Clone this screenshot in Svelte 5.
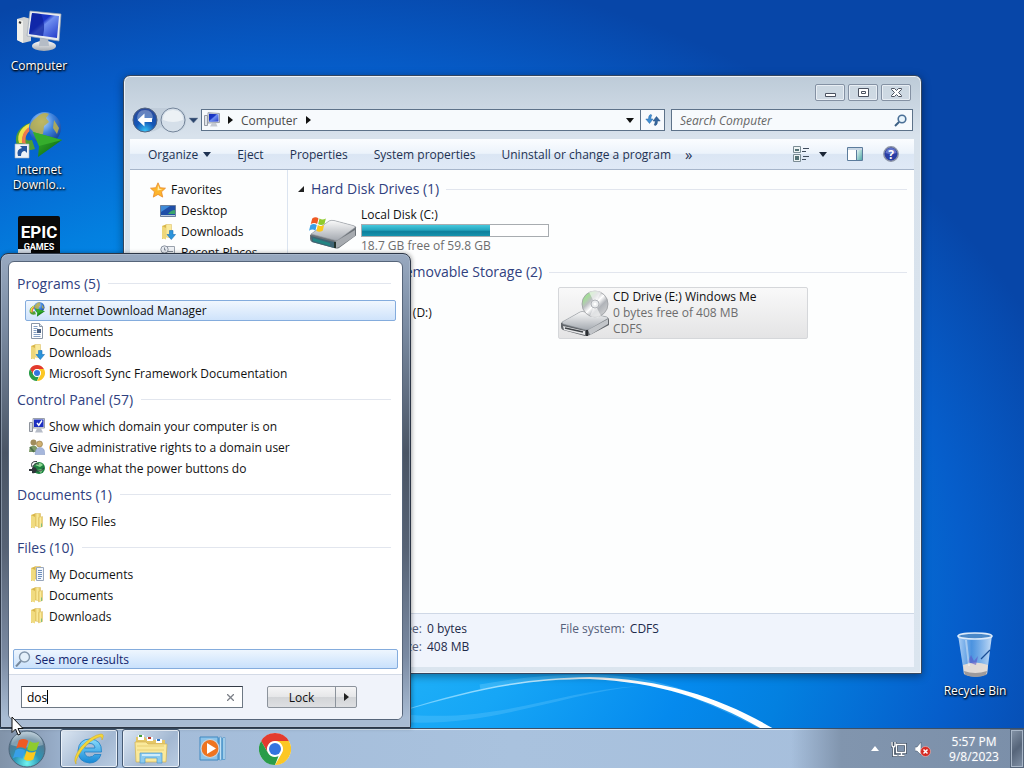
<script>
  const programs = [
    { text: 'Internet Download Manager', icon: 'idm', selected: true },
    { text: 'Documents', icon: 'doc' },
    { text: 'Downloads', icon: 'down' },
    { text: 'Microsoft Sync Framework Documentation', icon: 'chrome' }
  ];
  const results = [
    { title: 'Programs (5)', items: programs },
    {
      title: 'Control Panel (57)',
      items: [
        { text: 'Show which domain your computer is on', icon: 'domain' },
        { text: 'Give administrative rights to a domain user', icon: 'users' },
        { text: 'Change what the power buttons do', icon: 'power' }
      ]
    },
    { title: 'Documents (1)', items: [{ text: 'My ISO Files', icon: 'folder' }] },
    {
      title: 'Files (10)',
      items: [
        { text: 'My Documents', icon: 'folderdoc' },
        { text: 'Documents', icon: 'folder' },
        { text: 'Downloads', icon: 'folder' }
      ]
    }
  ];
  const favorites = [
    { text: 'Desktop', icon: 'desktop' },
    { text: 'Downloads', icon: 'down' },
    { text: 'Recent Places', icon: 'recent' }
  ];
  const commands = ['Eject', 'Properties', 'System properties', 'Uninstall or change a program'];
  let query = $state('dos');
  let search = $state('');
  const used = 69;
</script>

<svg class="defs" width="0" height="0" aria-hidden="true">
  <defs>
    <linearGradient id="screen" x1="0" y1="0" x2="1" y2="1"><stop offset="0" stop-color="#1430b8" /><stop offset=".4" stop-color="#1a35c8" /><stop offset=".5" stop-color="#6f8ff0" /><stop offset="1" stop-color="#2038c8" /></linearGradient>
    <linearGradient id="silver" x1="0" y1="0" x2="0" y2="1"><stop offset="0" stop-color="#fafafa" /><stop offset="1" stop-color="#a4a9b0" /></linearGradient>
    <radialGradient id="globe" cx=".4" cy=".3" r=".75"><stop offset="0" stop-color="#c4e2ff" /><stop offset=".5" stop-color="#3f83dc" /><stop offset="1" stop-color="#123c92" /></radialGradient>
    <linearGradient id="green" x1="0" y1="0" x2="1" y2="1"><stop offset="0" stop-color="#3fc034" /><stop offset="1" stop-color="#045c0c" /></linearGradient>
    <linearGradient id="fold" x1="0" y1="0" x2="1" y2="0"><stop offset="0" stop-color="#e6c864" /><stop offset=".5" stop-color="#faeb9c" /><stop offset="1" stop-color="#e0bd50" /></linearGradient>
    <radialGradient id="navblue" cx=".5" cy=".95" r=".9"><stop offset="0" stop-color="#38c4f6" /><stop offset=".45" stop-color="#1458b8" /><stop offset="1" stop-color="#2a4a9c" /></radialGradient>
    <radialGradient id="orb" cx=".5" cy=".9" r=".9"><stop offset="0" stop-color="#6ff5f0" /><stop offset=".4" stop-color="#2b95b5" /><stop offset=".75" stop-color="#537a92" /><stop offset="1" stop-color="#b0c6d4" /></radialGradient>
    <linearGradient id="bin" x1="0" y1="0" x2="1" y2="0"><stop offset="0" stop-color="#d6ebff" stop-opacity=".8" /><stop offset=".4" stop-color="#7ab8f0" stop-opacity=".6" /><stop offset="1" stop-color="#e4f2ff" stop-opacity=".85" /></linearGradient>
    <linearGradient id="disc" x1="0" y1="0" x2="1" y2="1"><stop offset="0" stop-color="#c0c4c4" /><stop offset=".2" stop-color="#a4dc98" /><stop offset=".35" stop-color="#bcbfc2" /><stop offset=".5" stop-color="#fff" /><stop offset=".65" stop-color="#b0b3b8" /><stop offset="1" stop-color="#ddd" /></linearGradient>
    <linearGradient id="ie" x1="0" y1="0" x2="0" y2="1"><stop offset="0" stop-color="#8adcfb" /><stop offset="1" stop-color="#1688d6" /></linearGradient>
    <linearGradient id="teal" x1="0" y1="0" x2="1" y2="1"><stop offset="0" stop-color="#e8f6f4" /><stop offset="1" stop-color="#4fa8a6" /></linearGradient>
    <linearGradient id="arc" x1="0" y1="0" x2="1" y2="0"><stop offset="0" stop-color="#5cc8ff" /><stop offset=".3" stop-color="#a8e2ff" /><stop offset=".55" stop-color="#fff" /></linearGradient>
  </defs>
</svg>

{#snippet flag()}
  <path d="M1 2q5-3 9 0l-2 8q-4-3-9 0z" fill="#ee5a24" />
  <path d="M11.500 2q4 3 9 0l-2 8q-5 3-9 0z" fill="#8fcb2e" />
  <path d="M-1.500 11.500q5-3 9 0l-2 8q-4-3-9 0z" fill="#38a0e8" />
  <path d="M9 11.500q4 3 9 0l-2 8q-5 3-9 0z" fill="#fcc81c" />
{/snippet}

{#snippet chrome()}
  <circle cx="16" cy="16" r="16" fill="#fff" />
  <path d="M16 0a16 16 0 0 1 13.860 8H16a8 8 0 0 0-6.930 12L2.140 8A16 16 0 0 1 16 0z" fill="#e33b2e" />
  <path d="M2.140 8l6.930 12A8 8 0 0 0 16 24l3.500-.8L16 32A16 16 0 0 1 2.140 8z" fill="#2a9c48" />
  <path d="M29.860 8A16 16 0 0 1 16 32l6.930-12A8 8 0 0 0 16 8z" fill="#fcc725" />
  <circle cx="16" cy="16" r="7.600" fill="#fff" />
  <circle cx="16" cy="16" r="6" fill="#3474e0" />
{/snippet}

{#snippet idm()}
  <path d="M20 10C6 12-1 24 3 33q5 8 18 4L18 28q-8 2-6-5 1-5 9-8z" fill="#4f9e34" />
  <path d="M20 10C8 13 2 22 5 31l4 0q-3-11 11-18z" fill="#f0e04a" />
  <path d="M19 13Q7 18 8 31l4 1q-3-10 8-16z" fill="#ee7a4c" />
  <circle cx="31" cy="16" r="16" fill="url(#globe)" />
  <path d="M22 6q7-7 13-4l-3 4 3 4-5 4-1 8-6 2-7-8q0-6 6-10zM40 8l5 8-2 6-4-6z" fill="#bdb048" opacity=".85" />
  <path d="M19 20l29 8-24 17 1-11z" fill="url(#green)" />
  <path d="M19 20l29 8-23 6z" fill="#35ad2c" />
{/snippet}

{#snippet icon(name)}
  <svg class="i16" viewBox="0 0 16 16" aria-hidden="true">
    {#if name === 'idm'}
      <g transform="scale(.33)">{@render idm()}</g>
    {:else if name === 'chrome'}
      <g transform="scale(.5)">{@render chrome()}</g>
    {:else if name === 'doc'}
      <path d="M2.500 .5h8l3 3v12h-11z" fill="#fff" stroke="#8b97a8" />
      <path d="M10.500 .5v3h3" fill="#d6dfea" stroke="#8b97a8" />
      <path d="M4.500 3.500h4M4.500 5.500h4M4.500 7.500h3M4.500 9.500h3M4.500 11.500h7M4.500 13.500h7" stroke="#86a0c4" />
      <path d="M8 6h4v4H8z" fill="#4a5f80" />
    {:else if name === 'down'}
      <path d="M2 2l4-1.500V13L2 15z" fill="#d8b548" /><path d="M6 .5h5.500V14L6 13z" fill="#faea9c" stroke="#d8b958" stroke-width=".5" /><path d="M2 2l4 2v11.500L2 14z" fill="#eed77a" />
      <path d="M9.500 6.500h3.500v4h2.500l-4.200 5-4.300-5h2.500z" fill="#2b94dc" stroke="#1b6fb4" stroke-width=".6" />
    {:else if name === 'folder' || name === 'folderdoc'}
      <path d="M2 2l4-1.500V13L2 15z" fill="#d8b548" /><path d="M6 .5h5.500V14L6 13z" fill="url(#fold)" stroke="#d8b958" stroke-width=".5" /><path d="M2 2l4 2v11.500L2 14z" fill="#f0db80" />
      {#if name === 'folder'}
        <path d="M9.500 4.500l4-1V13.500L9.500 15z" fill="url(#fold)" stroke="#dcc068" stroke-width=".5" /><path d="M12.500 10.500v3.500" stroke="#7fc080" />
      {:else}
        <path d="M7.500 1.500h7v13h-7z" fill="#f3f7fd" stroke="#98a6bc" /><path d="M9 4.500h4M9 6.500h4M9 8.500h4M9 10.500h4M9 12.500h3" stroke="#6c8dbb" />
      {/if}
    {:else if name === 'domain'}
      <path d="M.5 4.500h3v9h-3z" fill="#d6dae0" stroke="#8d939c" /><path d="M4 .5h11.500v9.500H4z" fill="#dfe3ea" stroke="#9aa0aa" /><path d="M5 1.500h9.500v7.500H5z" fill="#1c2fc0" /><path d="M8 5l1.800 2.200L13 2.500" stroke="#fff" stroke-width="1.500" fill="none" /><path d="M8 10.500h4l2 4H6z" fill="#b6bcc8" />
    {:else if name === 'users'}
      <circle cx="4.500" cy="3.500" r="3" fill="#a08c5c" /><path d="M0 13q0-6.500 4.500-6.500T9 13z" fill="#7d9a68" /><circle cx="10.500" cy="5" r="3" fill="#d0b070" stroke="#8b7440" stroke-width=".6" /><path d="M6 15.500q0-7 5-7t5 7z" fill="#a6b7dc" stroke="#8094c0" stroke-width=".5" /><path d="M1 8l4 5" stroke="#4c6f4c" stroke-width="2" />
    {:else if name === 'power'}
      <circle cx="10" cy="8" r="6" fill="#1e8240" /><path d="M6 5q5-4 8 0l-3 2zM8 10l6-1-2 4z" fill="#8ed892" /><path d="M0 9h3V7.500q4-1.500 5 2.500-1 4-5 3v-2H0z" fill="#30353b" /><path d="M3 7Q1 1 8 1.500M4 7q0-4 6-3" stroke="#30353b" fill="none" /><path d="M8 11q4 1 7-3" stroke="#30353b" fill="none" />
    {:else if name === 'desktop'}
      <path d="M.5 2.500h15v11H.5z" fill="#1f4fa8" stroke="#6b7f9c" /><path d="M1 3l9 0-9 6z" fill="#3f8bd8" /><path d="M1 12h14v1H1z" fill="#b9cadd" /><path d="M8 11q3-4 7-4v4z" fill="#3aa66c" />
    {:else if name === 'recent'}
      <path d="M6.500 1.500h8v12h-12v-6" fill="#eef1f5" stroke="#9aa2ad" /><circle cx="4.500" cy="4.500" r="3.700" fill="#e6eaf0" stroke="#8a929e" /><path d="M4.500 2.500v2.500H6M8 6.500h5M8 9.500h5M4 11.500h9" stroke="#7f8894" fill="none" />
    {:else if name === 'computer'}
      <path d="M.5 3.500h3v10h-3z" fill="#dfe3e8" stroke="#969ca6" /><path d="M4 .7l11.500.8v9L4 11z" fill="#e6e9ee" stroke="#9aa0aa" /><path d="M5 1.700l9.500.6V9.500L5 10z" fill="url(#screen)" /><path d="M8 11h4l1.500 3.500H6z" fill="#c4c9d2" />
    {/if}
  </svg>
{/snippet}

{#snippet drive()}
  <path d="M1 27L20 13q2-1 5-.5l19 5q4 1 3 3v7L30 40q-2 1-5 0L3 34q-2-1-2-3z" fill="#6c7278" />
  <path d="M2 26L20 13q2-1 5-.5l19 5q3 1 2 2L29 32q-2 1-4 0z" fill="url(#silver)" stroke="#999ea5" stroke-width=".6" />
  <path d="M2 28l23 6v6L3 34z" fill="#3f6474" /><path d="M4 30l17 5v3L4 33z" fill="#238583" />
  <path d="M26 34l20-12v6L30 39q-2 1-4 1z" fill="#a7abb0" /><path d="M25 34h2v6h-2z" fill="#24332c" />
{/snippet}

<div class="desktop">
  <main class="space">
    <svg class="swoosh" viewBox="0 0 1024 728" preserveAspectRatio="xMidYMax slice" aria-hidden="true">
      <path d="M400 714C500 724 560 690 640 686 560 694 490 728 400 722z" fill="#7fd4ff" opacity=".25" />
      <path d="M480 687C530 678 560 677 590 677 660 677 710 700 768 730" fill="none" stroke="#7fd8ff" stroke-width="5" opacity=".3" />
      <path d="M400 711C480 686 530 678 590 677 670 679 730 702 779 732L767 732C715 701 660 682 590 679 530 679 480 688 400 712z" fill="url(#arc)" />
    </svg>

    <div class="shortcuts">
      <button class="shortcut">
        <svg width="46" height="46" viewBox="0 0 46 46" aria-hidden="true">
          <path d="M1 11l7-2 7 2v22l-8 2-6-3z" fill="#d0d2d3" /><path d="M1 11l6 2v22l-6-3z" fill="#f0f0ec" /><path d="M3 14l2 1" stroke="#333" stroke-width="2" />
          <ellipse cx="28" cy="38" rx="12" ry="5" fill="url(#silver)" /><path d="M24 30h8l1 8H23z" fill="#b5bcc6" />
          <path d="M14 3l31 3-2 27-32-5z" fill="#e9ecef" stroke="#9ba5b2" stroke-width=".7" /><path d="M16 5l27 3-2 22-28-4z" fill="url(#screen)" /><path d="M16 5l9 1q5 10 2 22l-14-2z" fill="#0d229c" opacity=".7" />
        </svg>
        <span>Computer</span>
      </button>
      <button class="shortcut">
        <svg width="50" height="48" viewBox="0 0 50 48" aria-hidden="true">
          {@render idm()}
          <path d="M1 32h14v14H1z" fill="#eef3f8" stroke="#a9b3bf" stroke-width=".6" /><path d="M4 44q-2-7 4-8l-2-2h7v7l-2-2q-4 0-4 5z" fill="#26579f" />
        </svg>
        <span>Internet Downlo...</span>
      </button>
      <button class="shortcut" aria-label="Epic Games Launcher">
        <svg width="42" height="46" viewBox="0 0 42 46" aria-hidden="true">
          <path d="M2 0h38q2 0 2 2v36l-21 8L0 38V2q0-2 2-2z" fill="#0a0a0b" />
          <text x="21" y="22" class="epic">EPIC</text><text x="21" y="34" class="games">GAMES</text>
          <path d="M0 33h13v13H0z" fill="#d4dde7" />
        </svg>
      </button>
    </div>

    <div class="shortcuts right">
      <button class="shortcut">
        <svg width="42" height="48" viewBox="0 0 42 48" aria-hidden="true">
          <path d="M4 4h34l-5 39q-12 5-23 0z" fill="url(#bin)" />
          <path d="M9 34q12-5 25 0l-1 9q-12 5-23 0z" fill="#e8ddd5" opacity=".95" /><path d="M10 40q11 4 23 0l-1 4q-10 4-21 0z" fill="#9d9a9c" />
          <path d="M14 31l3-7 3 6 4-5-2 9z" fill="#5b55c8" opacity=".6" /><path d="M36 19l-9 9" stroke="#1a4e96" stroke-width="1.200" /><path d="M12 9l3 26" stroke="#fff" opacity=".4" stroke-width="2" />
          <ellipse cx="21" cy="5" rx="17" ry="3" fill="#4a88c8" stroke="#dceafa" stroke-width="1.600" />
        </svg>
        <span>Recycle Bin</span>
      </button>
    </div>

    <section class="window" aria-label="Computer">
      <div class="caption">
        <button aria-label="Minimize"><svg width="13" height="11"><path d="M1.500 6.500h10v3h-10z" fill="#fff" stroke="#4b5260" /></svg></button>
        <button aria-label="Maximize"><svg width="13" height="11"><path d="M1.500 1.500h10v8h-10zM4.500 4.500h4v2h-4z" fill="#fff" stroke="#4b5260" /></svg></button>
        <button aria-label="Close"><svg width="13" height="11"><path d="M1.500 1.500h3l2 2 2-2h3v1l-3 3 3 3v1h-3l-2-2-2 2h-3v-1l3-3-3-3z" fill="#fff" stroke="#4b5260" /></svg></button>
      </div>

      <div class="addressrow">
        <svg class="nav" width="66" height="26" viewBox="0 0 66 26" role="img" aria-label="Back and forward">
          <path d="M12 1h30q12 0 12 12t-12 12q-8 0-13-5-5 5-14 5z" fill="#b9c6d4" opacity=".6" />
          <circle cx="13" cy="13" r="12" fill="url(#navblue)" stroke="#526480" /><path d="M5 12q0-9 8-9t8 9q-8 3-16 0z" fill="#fff" opacity=".3" />
          <path d="M5.500 13l7-6.500v4.500H20v4h-7.500v4.500z" fill="#fff" />
          <circle cx="41" cy="13" r="12" fill="#d5dfe9" stroke="#74859a" /><path d="M31 13q0-10 10-10t10 10q-10 4-20 0z" fill="#f1f5f8" opacity=".8" />
          <path d="M57 11h9l-4.500 5z" fill="#2b466e" stroke="#7a8ba0" stroke-width=".5" />
        </svg>
        <div class="address">
          {@render icon('computer')}
          <svg width="5" height="8"><path d="M0 0l5 4-5 4z" fill="#111" /></svg>
          <span class="crumb">Computer</span>
          <svg width="5" height="8"><path d="M0 0l5 4-5 4z" fill="#111" /></svg>
          <button class="drop" aria-label="Previous locations"><svg width="8" height="5"><path d="M0 0h8L4 5z" fill="#111" /></svg></button>
          <button class="refresh" aria-label="Refresh"><svg width="16" height="14" viewBox="0 0 16 14"><path d="M5.500 1.500Q3.500 2 3.500 6H.8l3.700 4.500L8 6H5.800q0-2 1-4z" fill="#3f8fd4" stroke="#2a66a4" stroke-width=".5" /><path d="M10.500 12.500q2-.5 2-4.500h2.700l-3.700-4.500L8 8h2.200q0 2-1 4z" fill="#35679e" stroke="#274f80" stroke-width=".5" /></svg></button>
        </div>
        <label class="search">
          <input aria-label="Search Computer" placeholder="Search Computer" bind:value={search} />
          <svg width="13" height="13" viewBox="0 0 13 13" aria-hidden="true"><circle cx="8" cy="5" r="3.800" fill="#e8f4fc" stroke="#4a6f96" stroke-width="1.600" /><path d="M5 8l-4 4" stroke="#3c5f84" stroke-width="2" /></svg>
        </label>
      </div>

      <div class="client">
        <div class="toolbar">
          <button>Organize <svg width="8" height="5"><path d="M0 0h8L4 5z" fill="#1e3252" /></svg></button>
          {#each commands as c}<button>{c}</button>{/each}
          <button class="more">»</button>
          <div class="tools">
            <button aria-label="Change view"><svg width="16" height="16"><path d="M.5 .5h7v6h-7zM.5 8.500h7v7h-7z" fill="#eef4f4" stroke="#7b8c94" /><path d="M2 3h4v2H2zM2 10h4v4H2z" fill="#537074" /><path d="M10 2.500h6M9 5.500h4M10 10.500h6M9 13.500h4" stroke="#3f4c5c" /></svg></button>
            <button aria-label="More view options"><svg width="8" height="5"><path d="M0 0h8L4 5z" fill="#1b2636" /></svg></button>
            <button aria-label="Preview pane"><svg width="16" height="14"><path d="M.5 .5h15v13H.5z" fill="#fff" stroke="#5c7c9c" /><path d="M1 1h14v2H1z" fill="#c8d6e4" /><path d="M9.500 3v10" stroke="#5c7c9c" /><path d="M10 3h5v10h-5z" fill="url(#teal)" /></svg></button>
            <button aria-label="Help"><svg width="16" height="16"><circle cx="8" cy="8" r="7.200" fill="#2a3ea4" stroke="#8b93a6" stroke-width="1.400" /><path d="M2.500 7q1-5 5.500-5t5.500 5q-6 2-11 0z" fill="#8a9ae4" opacity=".6" /><text x="8" y="12.500" class="q">?</text></svg></button>
          </div>
        </div>

        <div class="panes">
          <nav class="tree">
            <a href="#favorites" class="root"><svg class="i16" viewBox="0 0 16 16" aria-hidden="true"><path d="M8 .8l2.200 4.900 5.300.5-4 3.600 1.200 5.300L8 12.400l-4.700 2.700 1.200-5.300-4-3.600 5.300-.5z" fill="#fdb52c" stroke="#e8892a" stroke-width=".8" /><path d="M8 3l1.500 4 3 .5-5 1z" fill="#fff0b0" /></svg>Favorites</a>
            {#each favorites as f}
              <a href="#{f.icon}">{@render icon(f.icon)}{f.text}</a>
            {/each}
          </nav>
          <div class="files">
            <h2 class="group"><svg width="6" height="6"><path d="M6 0v6H0z" fill="#222" /></svg>Hard Disk Drives (1)</h2>
            <div class="tiles">
              <button class="tile">
                <svg width="48" height="44" viewBox="0 0 48 44" aria-hidden="true">{@render drive()}<g transform="translate(2.500 9) scale(.7)">{@render flag()}</g></svg>
                <span class="info"><span>Local Disk (C:)</span><span class="meter"><span style="width:{used}%"></span></span><span class="dim">18.7 GB free of 59.8 GB</span></span>
              </button>
            </div>
            <h2 class="group"><svg width="6" height="6"><path d="M6 0v6H0z" fill="#222" /></svg>Devices with Removable Storage (2)</h2>
            <div class="tiles">
              <button class="tile">
                <svg width="48" height="44" viewBox="0 0 48 44" aria-hidden="true">{@render drive()}</svg>
                <span class="info"><span>CD Drive (D:)</span></span>
              </button>
              <button class="tile picked">
                <svg width="48" height="48" viewBox="0 0 48 48" aria-hidden="true">
                  <path d="M0 34l19-11q2-1 5 0l22 5q2 1 2 3v5L29 46q-2 1-5 1L2 41q-2-1-2-3z" fill="#62666b" />
                  <path d="M1 33l18-10q2-1 5 0l22 5q2 1 0 2L29 40q-2 1-4 1L2 35z" fill="url(#silver)" stroke="#8d9298" stroke-width=".5" />
                  <path d="M2 37l22 5v4L3 41z" fill="#e6e7e9" /><path d="M4 39l18 4" stroke="#3f4347" stroke-width="1.500" /><path d="M27 41l20-11v5L29 46z" fill="#c2c5c9" /><path d="M25 41h2v6h-2z" fill="#2c2f33" />
                  <circle cx="34" cy="15" r="13" fill="url(#disc)" stroke="#999ca0" stroke-width=".8" /><path d="M34 15L28 3q6-3 12 0zM34 15l6 12q-6 3-11 0z" fill="#fff" opacity=".6" /><circle cx="34" cy="15" r="4" fill="#e9ebed" stroke="#b0b3b8" /><circle cx="34" cy="15" r="1.500" fill="#fff" />
                </svg>
                <span class="info"><span>CD Drive (E:) Windows Me</span><span class="dim">0 bytes free of 408 MB</span><span class="dim">CDFS</span></span>
              </button>
            </div>
          </div>
        </div>

        <dl class="details">
          <div><dt>Space free:</dt><dd>0 bytes</dd></div>
          <div><dt>File system:</dt><dd>CDFS</dd></div>
          <div><dt>Total size:</dt><dd>408 MB</dd></div>
        </dl>
      </div>
    </section>

    <section class="start" aria-label="Start menu">
      <div class="sheet">
        <div class="results">
          {#each results as g}
            <h2 class="group">{g.title}</h2>
            {#each g.items as it}
              <button class="hit" class:on={it.selected}>{@render icon(it.icon)}{it.text}</button>
            {/each}
          {/each}
        </div>
        <button class="seemore"><svg width="16" height="16" viewBox="0 0 16 16" aria-hidden="true"><circle cx="9.500" cy="6" r="5" fill="#e4f0fa" stroke="#8397ac" stroke-width="1.400" /><path d="M6 10l-5 5.500" stroke="#77899c" stroke-width="2" /></svg>See more results</button>
        <div class="foot">
          <div class="query">
            <input aria-label="Search programs and files" bind:value={query} />
            <span class="caret"></span>
            <button aria-label="Clear" onclick={() => (query = '')}><svg width="7" height="7"><path d="M0 0l7 7M7 0L0 7" stroke="#7c8088" stroke-width="1.300" /></svg></button>
          </div>
          <div class="lock">
            <button>Lock</button>
            <button aria-label="More shut down options"><svg width="5" height="8"><path d="M0 0l5 4-5 4z" fill="#222" /></svg></button>
          </div>
        </div>
      </div>
    </section>
  </main>

  <footer class="taskbar">
    <button class="orb" aria-label="Start">
      <svg width="38" height="38" viewBox="0 0 38 38"><circle cx="19" cy="19" r="18" fill="url(#orb)" stroke="#4d6478" /><path d="M3 15Q5 2 19 2t16 13q-16 5-32 0z" fill="#fff" opacity=".28" /><g transform="translate(10 8) rotate(4) scale(1.050)">{@render flag()}</g></svg>
    </button>
    <button class="task active" aria-label="Internet Explorer">
      <svg width="32" height="32" viewBox="0 0 32 32"><path d="M28.500 19H11.500q.5 5 5 5 3.500 0 5-2.500h6.500Q25 30 16.500 30 5 29 5 17.500 6 6 17 6q12 .5 11.500 13zM11.500 15h10.500q-.5-4.500-5-4.500T11.500 15z" fill="url(#ie)" stroke="#1e7fc4" stroke-width=".8" /><path d="M3 31Q-1 26 8 14 19 2 28 1q4 0 1 6 0-4-3-3Q17 7 9 17 2 27 3 31z" fill="#f4d63a" stroke="#d0a818" stroke-width=".5" /></svg>
    </button>
    <button class="task active" aria-label="Windows Explorer">
      <svg width="34" height="32" viewBox="0 0 34 32"><path d="M2 4h9l2 3h18v20H2z" fill="#e5c766" /><path d="M4 2h6v5H4z" fill="#fff" /><path d="M5 2h3v2H5z" fill="#4a9e3a" /><path d="M13 4h6v4h-6z" fill="#fff" /><path d="M14 4h3v2h-3z" fill="#c0392b" /><path d="M22 6h6v4h-6z" fill="#fff" /><path d="M23 6h3v2h-3z" fill="#3478c8" /><path d="M1 9h11l2 2h19l-1 18H2z" fill="#fae99b" stroke="#d2b350" stroke-width=".7" /><path d="M3 13h27M3 17h27" stroke="#e8cf74" /><path d="M6 20h22v10h-5v-5H11v5H6z" fill="#8bcbf0" stroke="#4a9ad0" stroke-width=".7" /><path d="M8 22h18" stroke="#e6f7ff" stroke-width="1.500" /></svg>
    </button>
    <button class="task" aria-label="Windows Media Player">
      <svg width="28" height="26" viewBox="0 0 28 26"><path d="M10 2h16v22H10z" fill="#5ea2d4" /><path d="M24 1.500h2v22h-2zM20.500 1h2v23h-2z" fill="#bfe1f5" stroke="#4088c0" stroke-width=".5" /><path d="M1 1h18v23H1z" fill="#8cc4ea" stroke="#4088c0" /><circle cx="11" cy="12.500" r="9" fill="#ee7420" stroke="#c9d5df" stroke-width="1.200" /><path d="M8 7l9 5.500-9 5.500z" fill="#fff" /></svg>
    </button>
    <button class="task" aria-label="Google Chrome"><svg width="32" height="32" viewBox="0 0 32 32">{@render chrome()}</svg></button>
    <div class="tray">
      <button aria-label="Show hidden icons"><svg width="8" height="5"><path d="M4 0l4 5H0z" fill="#fff" /></svg></button>
      <button aria-label="Network"><svg width="16" height="16"><path d="M5.500 3.500h9v8h-9zM7.500 14.500h6M10.500 12v2M2.500 7v7.500h4M1 1v3q0 2 1.500 2T4 4V1" fill="none" stroke="#1f2b3a" stroke-width="3" opacity=".6" /><path d="M5.500 3.500h9v8h-9zM7.500 14.500h6M10.500 12v2M2.500 6v8.500h4M1 1v3q0 2 1.500 2T4 4V1" fill="none" stroke="#fff" stroke-width="1.300" /></svg></button>
      <button aria-label="Volume muted"><svg width="16" height="16"><path d="M0 6h2l4-5v13l-4-4H0z" fill="#fff" stroke="#435265" stroke-width=".5" /><circle cx="10.500" cy="10.500" r="5" fill="#d62a22" stroke="#eec0bd" stroke-width=".6" /><path d="M8.500 8.500l4 4M12.500 8.500l-4 4" stroke="#fff" stroke-width="1.500" /></svg></button>
      <button class="clock"><span>5:57 PM</span><span>9/8/2023</span></button>
      <button class="peek" aria-label="Show desktop"></button>
    </div>
  </footer>
  <svg class="pointer" width="14" height="20" viewBox="0 0 14 20" aria-hidden="true"><path d="M1 1v15.500l3.500-3.500 2.500 6 2.500-1-2.500-5.500h5z" fill="#fff" stroke="#111" /></svg>
</div>

<style>
  :global(body) { margin: 0; overflow: hidden; }
  .desktop, .desktop button, .desktop input { font: 12px/15px "Open Sans", "Noto Sans", sans-serif; }
  .desktop { display: flex; flex-direction: column; height: 100vh; position: relative; overflow: hidden; color: #111; }
  .defs { position: absolute; }
  button { border: 0; background: none; padding: 0; color: inherit; text-align: left; }
  svg { display: block; flex: none; }
  h2, dl, dd { margin: 0; }
  a { color: inherit; text-decoration: none; }
  .i16 { width: 16px; height: 16px; }

  .space { flex: 1; position: relative; min-height: 0; background: radial-gradient(ellipse 78% 85% at 30% 80%, #2cc0fa 0, #16a6f6 30%, #058aee 50%, #0380e0 62%, #065ecb 82%, #0746a8 100%); }
  .swoosh { position: absolute; inset: 0; width: 100%; height: 100%; }

  .shortcuts { position: absolute; left: 2px; top: 8px; display: grid; grid-auto-rows: 104px; width: 74px; }
  .shortcuts.right { left: auto; top: auto; right: 10px; bottom: 30px; width: 78px; grid-auto-rows: auto; }
  .shortcut { display: flex; flex-direction: column; align-items: center; gap: 4px; text-align: center; align-self: start; color: #fff; text-shadow: 0 1px 2px #000, 1px 1px 2px #000; }
  .shortcut + .shortcut { gap: 2px; }
  .epic { font: 700 17px "Roboto", sans-serif; fill: #fff; text-anchor: middle; }
  .games { font: 700 9px "Roboto", sans-serif; fill: #fff; text-anchor: middle; }

  .window { position: absolute; inset: 75px 102px 54px 123px; box-sizing: border-box; display: flex; flex-direction: column; border: 1px solid #34465f; border-radius: 7px 7px 0 0; padding: 8px 7px 6px 6px; background: linear-gradient(#bdcbd8, #d8e2ec 60px, #dbe5ef); box-shadow: inset 0 0 0 1px #eef3f8, 0 2px 8px #0006; }
  .caption { display: flex; justify-content: flex-end; gap: 3px; padding-right: 3px; height: 25px; }
  .caption button { width: 30px; height: 17px; display: grid; place-items: center; border: 1px solid #8491a3; border-radius: 2px; background: #d3dde699; box-shadow: inset 0 0 0 1px #e8eef4; box-sizing: border-box; }
  .addressrow { display: flex; align-items: center; gap: 6px; padding: 0 1px 0 2px; height: 22px; }
  .nav { margin-right: -3px; }
  .address { flex: 1; display: flex; align-items: center; gap: 8px; height: 20px; border: 1px solid #5d7289; background: #f7fafd; padding-left: 2px; color: #4c4c4c; }
  .drop { margin-left: auto; }
  .refresh { align-self: stretch; width: 24px; border-left: 1px solid #5d7289; display: grid; place-items: center; }
  .drop + .refresh { margin-left: -2px; }
  .search { display: flex; align-items: center; width: 240px; height: 20px; box-sizing: content-box; border: 1px solid #5d7289; background: #f7fafd; }
  .search input { flex: 1; min-width: 0; border: 0; background: none; padding: 0 8px; font-style: italic; outline: 0; }
  .search input::placeholder { color: #666; opacity: 1; }
  .search svg { margin-right: 5px; }

  .client { flex: 1; min-height: 0; margin-top: 8px; display: flex; flex-direction: column; background: #fdfefe; }
  .toolbar { display: flex; align-items: center; gap: 26px; height: 30px; padding: 0 15px 0 18px; border-bottom: 1px solid #a6b5ca; background: linear-gradient(#fbfdff, #ecf3fb 48%, #dbe6f4 50%, #dfe9f6); color: #1e3252; white-space: nowrap; }
  .toolbar button { display: flex; align-items: center; gap: 5px; }
  .toolbar .more { font-size: 15px; margin-left: -12px; }
  .tools { margin-left: auto; display: flex; align-items: center; gap: 20px; }
  .tools button + button { margin-left: -10px; }
  .tools button:nth-child(n + 3) { margin-left: 0; }
  .q { font: 700 12px "Open Sans", sans-serif; fill: #fff; text-anchor: middle; }

  .panes { flex: 1; min-height: 0; display: flex; }
  .tree { width: 158px; box-sizing: border-box; border-right: 1px solid #dbe4f0; padding-top: 9px; overflow: hidden; }
  .tree a { display: flex; align-items: center; gap: 5px; height: 21px; padding-left: 30px; }
  .tree .root { padding-left: 20px; }
  .files { flex: 1; min-width: 0; padding: 4px 7px 0 10px; }
  .group { display: flex; align-items: center; font: 14px/20px "Open Sans", "Noto Sans", sans-serif; color: #30417f; white-space: nowrap; }
  .group::after { content: ""; flex: 1; height: 1px; margin-left: 8px; background: #e2e6ee; }
  .files .group { gap: 7px; height: 30px; }
  .files .group::after { margin-left: 0; }
  .tiles { display: flex; gap: 2px; padding-left: 8px; height: 53px; }
  .tile { display: flex; align-items: center; gap: 4px; width: 250px; height: 52px; box-sizing: border-box; padding: 0 2px; border: 1px solid transparent; border-radius: 2px; white-space: nowrap; }
  .picked { border-color: #d5d7da; background: linear-gradient(#f9f9f9, #e4e4e5); }
  .info { display: flex; flex-direction: column; line-height: 16px; }
  .dim { color: #6d6d6d; }
  .meter { width: 186px; height: 11px; border: 1px solid #a8acb0; background: #fff; margin: 1px 0; }
  .meter span { display: block; height: 100%; background: linear-gradient(#46c8dc, #25a6bf 45%, #0d7f9c 60%, #1593ae); }
  .details { display: grid; grid-template-columns: 226px 1fr; align-content: start; height: 54px; box-sizing: border-box; border-top: 1px solid #cfd8e6; padding: 6px 0 0 204px; background: #f0f4fc; line-height: 18px; white-space: nowrap; }
  .details div { display: flex; gap: 5px; }
  .details dt { min-width: 88px; text-align: right; color: #55607a; }
  .details div:nth-child(2) dt { min-width: 0; }
  .details dd { color: #1e2a4a; }

  .start { position: absolute; left: 0; bottom: 0; width: 411px; box-sizing: border-box; padding: 7px; border: 1px solid #2c3646; border-radius: 8px 8px 0 0; background: linear-gradient(#98a9c0, #7b8ca3 15%, #4a5565 42%, #566274 62%, #7a8aa2 85%, #a8bbd3 98%); box-shadow: inset 0 0 0 1px #b6c4d580, 1px 0 4px #0005; }
  .sheet { border: 1px solid #56657a; border-radius: 6px; background: #fff; overflow: hidden; display: flex; flex-direction: column; }
  .results { padding: 6px 6px 22px 16px; }
  .start .group { height: 31px; margin: 0 5px 0 -8px; padding-bottom: 1px; }
  .hit { display: flex; align-items: center; gap: 4px; width: 100%; height: 21px; padding: 0 3px 1px; border: 1px solid transparent; border-radius: 2px; box-sizing: border-box; white-space: nowrap; }
  .on { border-color: #84acdd; background: linear-gradient(#f1f7fe, #cfe3fb); }
  .seemore { display: flex; align-items: center; gap: 4px; height: 20px; margin: 0 4px 5px; padding: 0 1px; border: 1px solid #84acdd; border-radius: 2px; background: linear-gradient(#eef6fe, #c9e1fc); color: #13246e; box-sizing: border-box; }
  .foot { display: flex; align-items: center; gap: 24px; height: 44px; padding: 0 12px; border-top: 1px solid #d3dae6; background: #f0f3fa; }
  .query { position: relative; display: flex; align-items: center; width: 220px; height: 20px; border: 1px solid #6d7884; border-top-color: #333b46; background: #fff; }
  .query input { flex: 1; min-width: 0; border: 0; padding: 0 5px; outline: 0; background: none; }
  .query button { padding-right: 8px; }
  .caret { position: absolute; left: 25px; top: 3px; width: 1px; height: 14px; background: #000; }
  .lock { display: flex; border: 1px solid #8c939c; border-radius: 2px; background: linear-gradient(#f5f5f6, #e6e7e9 48%, #d2d4d7 50%, #dedfe2); height: 20px; }
  .lock button { width: 67px; text-align: center; display: grid; place-items: center; }
  .lock button + button { width: 21px; border-left: 1px solid #8c939c; }

  .taskbar { display: flex; align-items: center; height: 40px; box-sizing: border-box; border-top: 1px solid #3b5068; background: linear-gradient(90deg, #8193a9 0, #8fa3bd 40px, #a3bbd8 80px, #a9c2de 50%, #a5bddb); box-shadow: inset 0 1px #dbe7f3; }
  .orb { width: 60px; padding-left: 8px; box-sizing: border-box; }
  .task { width: 58px; height: 39px; margin-right: 4px; display: grid; place-items: center; box-sizing: border-box; }
  .active { border: 1px solid #465b75; border-radius: 3px; background: linear-gradient(135deg, #dce7f3, #a3b8d2 60%, #b9cce2); box-shadow: inset 0 0 0 1px #eaf1f9; }
  .tray { margin-left: auto; align-self: stretch; display: flex; align-items: center; gap: 8px; padding-left: 110px; color: #fff; background: linear-gradient(90deg, #7c91ac00 30px, #8195ae 80px, #7b8fa9); }
  .tray button:first-child { margin-right: 4px; }
  .clock { display: flex; flex-direction: column; align-items: center; line-height: 17px; width: 66px; margin-left: 2px; text-align: center; text-shadow: 0 0 2px #fff5; }
  .tray .peek { align-self: stretch; width: 14px; margin-left: -5px; border: 1px solid #55657a; background: linear-gradient(135deg, #8695a8, #56657a 50%, #8191a6); box-shadow: inset 0 0 0 1px #a9b7c8; }
  .pointer { position: absolute; left: 11px; bottom: 32px; }
</style>
